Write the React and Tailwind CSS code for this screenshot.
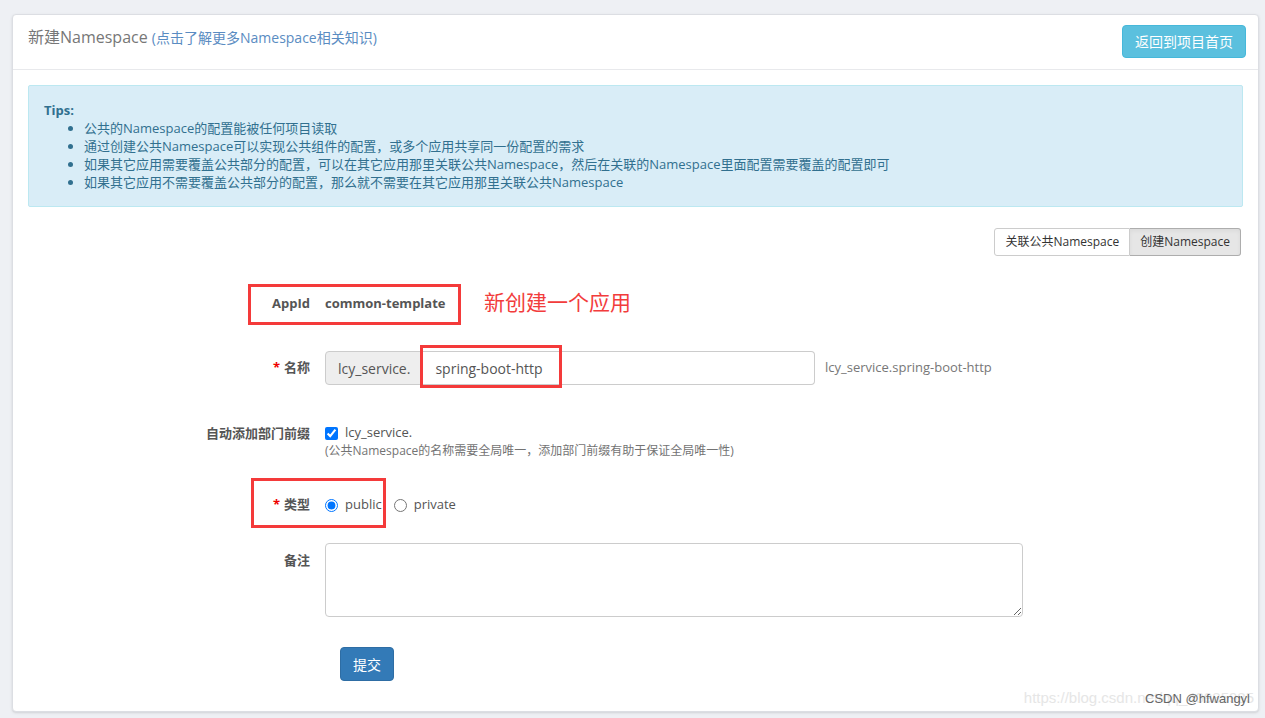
import { useState } from 'react';

const FONT = { fontFamily: '"Open Sans", "Noto Sans CJK SC", sans-serif' };

const TIPS = [
  '公共的Namespace的配置能被任何项目读取',
  '通过创建公共Namespace可以实现公共组件的配置，或多个应用共享同一份配置的需求',
  '如果其它应用需要覆盖公共部分的配置，可以在其它应用那里关联公共Namespace，然后在关联的Namespace里面配置需要覆盖的配置即可',
  '如果其它应用不需要覆盖公共部分的配置，那么就不需要在其它应用那里关联公共Namespace',
];

function Label({ required, children, className = '' }) {
  return (
    <div className={`w-[297px] shrink-0 text-right text-[13px] font-bold text-[#555] ${className}`}>
      {required && <span className="text-[#e00] mr-1">*</span>}
      {children}
    </div>
  );
}

export default function App() {
  const [mode, setMode] = useState('create');
  const [type, setType] = useState('public');
  const [prefix, setPrefix] = useState(true);
  const [name, setName] = useState('spring-boot-http');

  return (
    <div style={FONT} className="min-h-[718px] bg-[#eef0f4] pt-[14px] pl-[12px] pr-[6px] pb-[7px]">
      <div className="relative bg-white border border-[#dcdee3] rounded-[4px] shadow-sm">
        {/* header */}
        <div className="flex items-center justify-between h-[55px] pl-[15px] pr-[12px] border-b border-[#e8e9ec]">
          <div className="text-[16px] text-[#777] -mt-[11px]">
            新建Namespace{' '}
            <span className="text-[14px] text-[#5a8cc2]">(点击了解更多Namespace相关知识)</span>
          </div>
          <button className="h-[33px] px-[12px] bg-[#5bc0de] text-white text-[14px] rounded-[4px] border border-[#46b8da] -mt-[1px]">
            返回到项目首页
          </button>
        </div>

        <div className="px-[15px] pt-[15px]">
          {/* tips */}
          <div className="bg-[#d9edf7] border border-[#bce8f1] text-[#31708f] text-[13px] leading-[18px] px-[15px] py-[15px] rounded-[2px]">
            <div className="font-bold">Tips:</div>
            <ul className="list-disc pl-[40px]">
              {TIPS.map((t) => (
                <li key={t}>{t}</li>
              ))}
            </ul>
          </div>

          {/* mode toggle */}
          <div className="flex justify-end mt-[21px] mr-[2px]">
            <div className="flex text-[12px] text-[#333]">
              <button
                onClick={() => setMode('link')}
                className={`h-[28px] px-[10px] border border-[#ccc] rounded-l-[3px] ${mode === 'link' ? 'bg-[#e6e6e6] shadow-inner' : 'bg-white'}`}
              >
                关联公共Namespace
              </button>
              <button
                onClick={() => setMode('create')}
                className={`h-[28px] px-[10px] border border-l-0 border-[#adadad] rounded-r-[3px] ${mode === 'create' ? 'bg-[#e6e6e6] shadow-inner' : 'bg-white'}`}
              >
                创建Namespace
              </button>
            </div>
          </div>
        </div>

        {/* form */}
        <div className="pb-[30px]">
          {/* AppId */}
          <div className="relative flex items-center h-[34px] mt-[31px]">
            <Label>AppId</Label>
            <div className="ml-[15px] text-[13px] font-bold text-[#555]">common-template</div>
            <div className="absolute left-[235px] top-[-3px] w-[213px] h-[41px] border-[3px] border-[#f43a3a]" />
            <div className="absolute left-[471px] top-[1px] text-[21px] leading-[28px] text-[#f23c3c]">新创建一个应用</div>
          </div>

          {/* 名称 */}
          <div className="relative flex items-center mt-[30px]">
            <Label required>名称</Label>
            <div className="ml-[15px] flex h-[34px] w-[490px]">
              <div className="flex items-center px-[12px] bg-[#eee] border border-[#ccc] rounded-l-[4px] text-[14px] text-[#555]">
                lcy_service.
              </div>
              <input
                value={name}
                onChange={(e) => setName(e.target.value)}
                className="flex-1 min-w-0 px-[12px] border border-l-0 border-[#ccc] rounded-r-[4px] text-[14px] text-[#555] outline-none"
              />
            </div>
            <div className="ml-[10px] text-[13px] text-[#777]">lcy_service.{name}</div>
            <div className="absolute left-[407px] top-[-6px] w-[142px] h-[43px] border-[3px] border-[#f43a3a]" />
          </div>

          {/* 自动添加部门前缀 */}
          <div className="flex mt-[39px]">
            <Label className="leading-[18px]">自动添加部门前缀</Label>
            <div className="ml-[15px]">
              <label className="flex items-center h-[18px] text-[13px] text-[#555]">
                <input
                  type="checkbox"
                  checked={prefix}
                  onChange={(e) => setPrefix(e.target.checked)}
                  className="w-[13px] h-[13px] m-0 mr-[7px]"
                />
                lcy_service.
              </label>
              <div className="text-[12px] leading-[18px] text-[#737373]">
                (公共Namespace的名称需要全局唯一，添加部门前缀有助于保证全局唯一性)
              </div>
            </div>
          </div>

          {/* 类型 */}
          <div className="relative flex items-center h-[34px] mt-[28px]">
            <Label required>类型</Label>
            <div className="ml-[15px] flex items-center text-[13px] text-[#555]">
              <label className="flex items-center">
                <input
                  type="radio"
                  name="type"
                  checked={type === 'public'}
                  onChange={() => setType('public')}
                  className="w-[13px] h-[13px] m-0 mr-[7px]"
                />
                public
              </label>
              <label className="flex items-center ml-[12px]">
                <input
                  type="radio"
                  name="type"
                  checked={type === 'private'}
                  onChange={() => setType('private')}
                  className="w-[13px] h-[13px] m-0 mr-[7px]"
                />
                private
              </label>
            </div>
            <div className="absolute left-[238px] top-[-10px] w-[135px] h-[50px] border-[3px] border-[#f43a3a]" />
          </div>

          {/* 备注 */}
          <div className="flex mt-[21px]">
            <Label className="pt-[7px] leading-[20px]">备注</Label>
            <textarea className="ml-[15px] w-[698px] h-[74px] border border-[#ccc] rounded-[4px] px-[12px] py-[6px] text-[14px] outline-none" />
          </div>

          {/* submit */}
          <div className="flex mt-[30px]">
            <div className="w-[297px] shrink-0" />
            <button className="ml-[30px] h-[34px] w-[54px] bg-[#337ab7] border border-[#2e6da4] rounded-[4px] text-white text-[14px]">
              提交
            </button>
          </div>
        </div>

        {/* watermark */}
        <div className="absolute right-[4px] bottom-[2px] flex items-end">
          <span className="text-[15px] text-[#e6e6e6] font-['Liberation_Sans',sans-serif]">https://blog.csdn.net/qq_40985985</span>
          <span className="absolute right-[4px] bottom-[1px] text-[13px] text-[#666] font-['Liberation_Sans',sans-serif]">CSDN @hfwangyl</span>
        </div>
      </div>
    </div>
  );
}
